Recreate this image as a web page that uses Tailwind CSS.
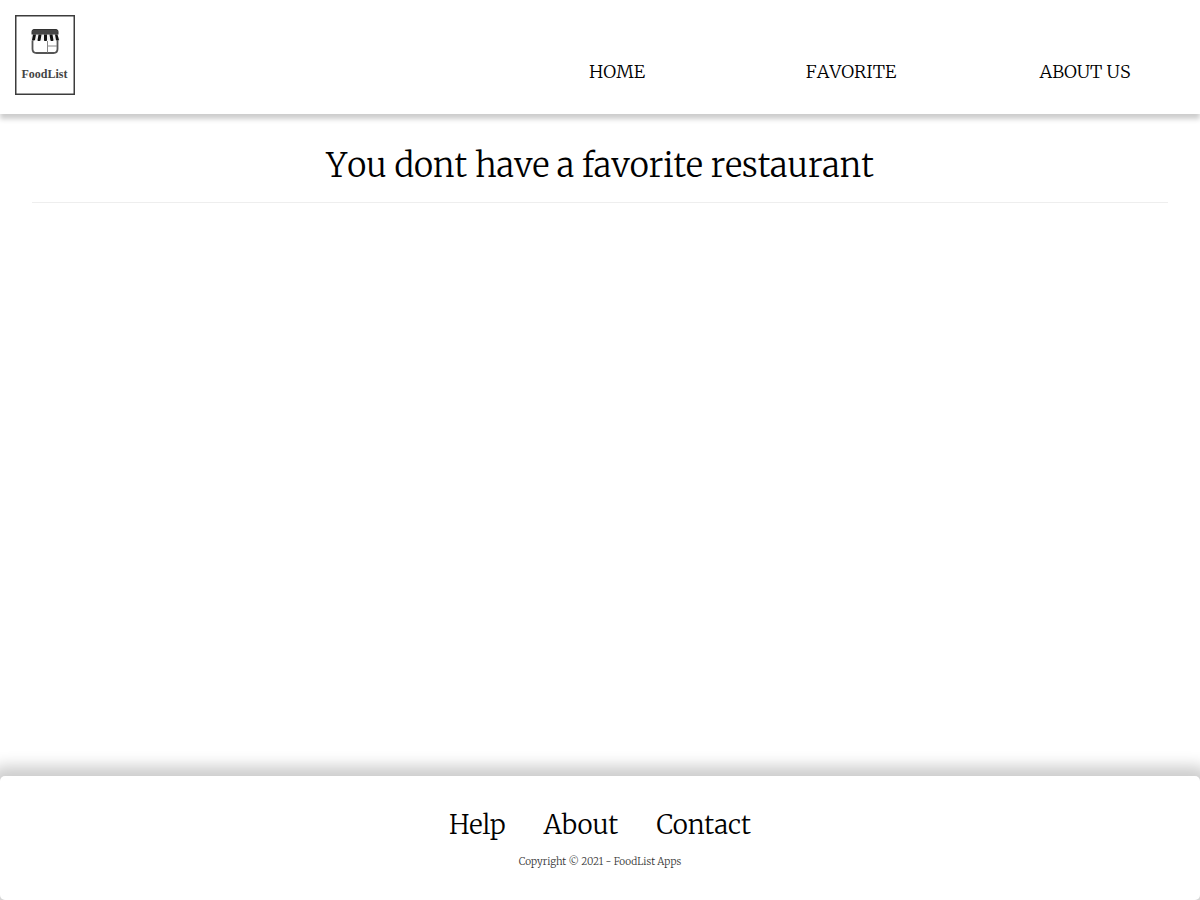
<!DOCTYPE html>
<html lang="en">
<head>
<meta charset="utf-8">
<meta name="viewport" content="width=device-width, initial-scale=1">
<title>FoodList</title>
<script src="https://cdn.jsdelivr.net/npm/@tailwindcss/browser@4"></script>
</head>
<body class="flex min-h-screen flex-col bg-white font-['Merriweather','DejaVu_Serif_Condensed','DejaVu_Serif',serif] font-[350] text-black">
<header class="flex h-[114px] items-start justify-between shadow-[0_5px_5px_rgba(0,0,0,0.2)]">
  <a href="#" aria-label="FoodList" class="ml-[15px] mt-[15px] block">
    <svg class="h-20 w-15" viewBox="0 0 60 80" fill="none">
      <rect x=".75" y=".75" width="58.5" height="78.5" fill="#fff" stroke="#3c3c3c" stroke-width="1.5"/>
      <path d="M17.500 22V34q0 4 4 4h17q4 0 4-4V22" stroke="#555" stroke-width="1.800"/>
      <path d="M32.500 26v11.500M32.500 31h9.500" stroke="#888" stroke-width="1"/>
      <path d="M19 14.500h22q2 0 2 2v3H17v-3q0-2 2-2z" fill="#444" stroke="#333"/>
      <path d="M17 19.500h26l2 6H15z" fill="#eee"/>
      <path d="M18 19.500h3l-1 5.500q-2 1-3 0zM23.500 19.500h3l-1 6q-2 1-3 0zM29 19.500h3v6q-1.500 1-3 0zM34.500 19.500h3l1 6q-2 1-3 0zM40 19.500h2.500l1.500 5.500q-2 1-3 0z" fill="#111"/>
      <text x="29.500" y="63" text-anchor="middle" fill="#444" class="font-['Liberation_Serif',serif] text-[12px] font-bold">FoodList</text>
    </svg>
  </a>
  <nav class="flex w-[58.5%] pt-[58px] text-center text-[18px] leading-7 [font-kerning:none]">
    <a href="#" class="flex-1 pl-1">HOME</a>
    <a href="#" class="flex-1 pl-1">FAVORITE</a>
    <a href="#" class="flex-1 pl-1">ABOUT US</a>
  </nav>
</header>
<main class="flex-1 px-8 pt-8">
  <h1 class="border-b border-[#eee] pb-4 text-center text-[33px] font-[350] leading-10 [font-kerning:none]">You dont have a favorite restaurant</h1>
</main>
<footer class="flex h-[124px] flex-col items-center rounded-[5px] bg-white pt-[29px] shadow-[0_0_15px_10px_rgba(0,0,0,0.2)]">
  <nav class="flex gap-[38px] text-[26px] font-light leading-10">
    <a href="#">Help</a>
    <a href="#">About</a>
    <a href="#">Contact</a>
  </nav>
  <p class="mt-[7px] text-[10px] leading-5 text-[#333]">Copyright © 2021 - FoodList Apps</p>
</footer>
</body>
</html>
